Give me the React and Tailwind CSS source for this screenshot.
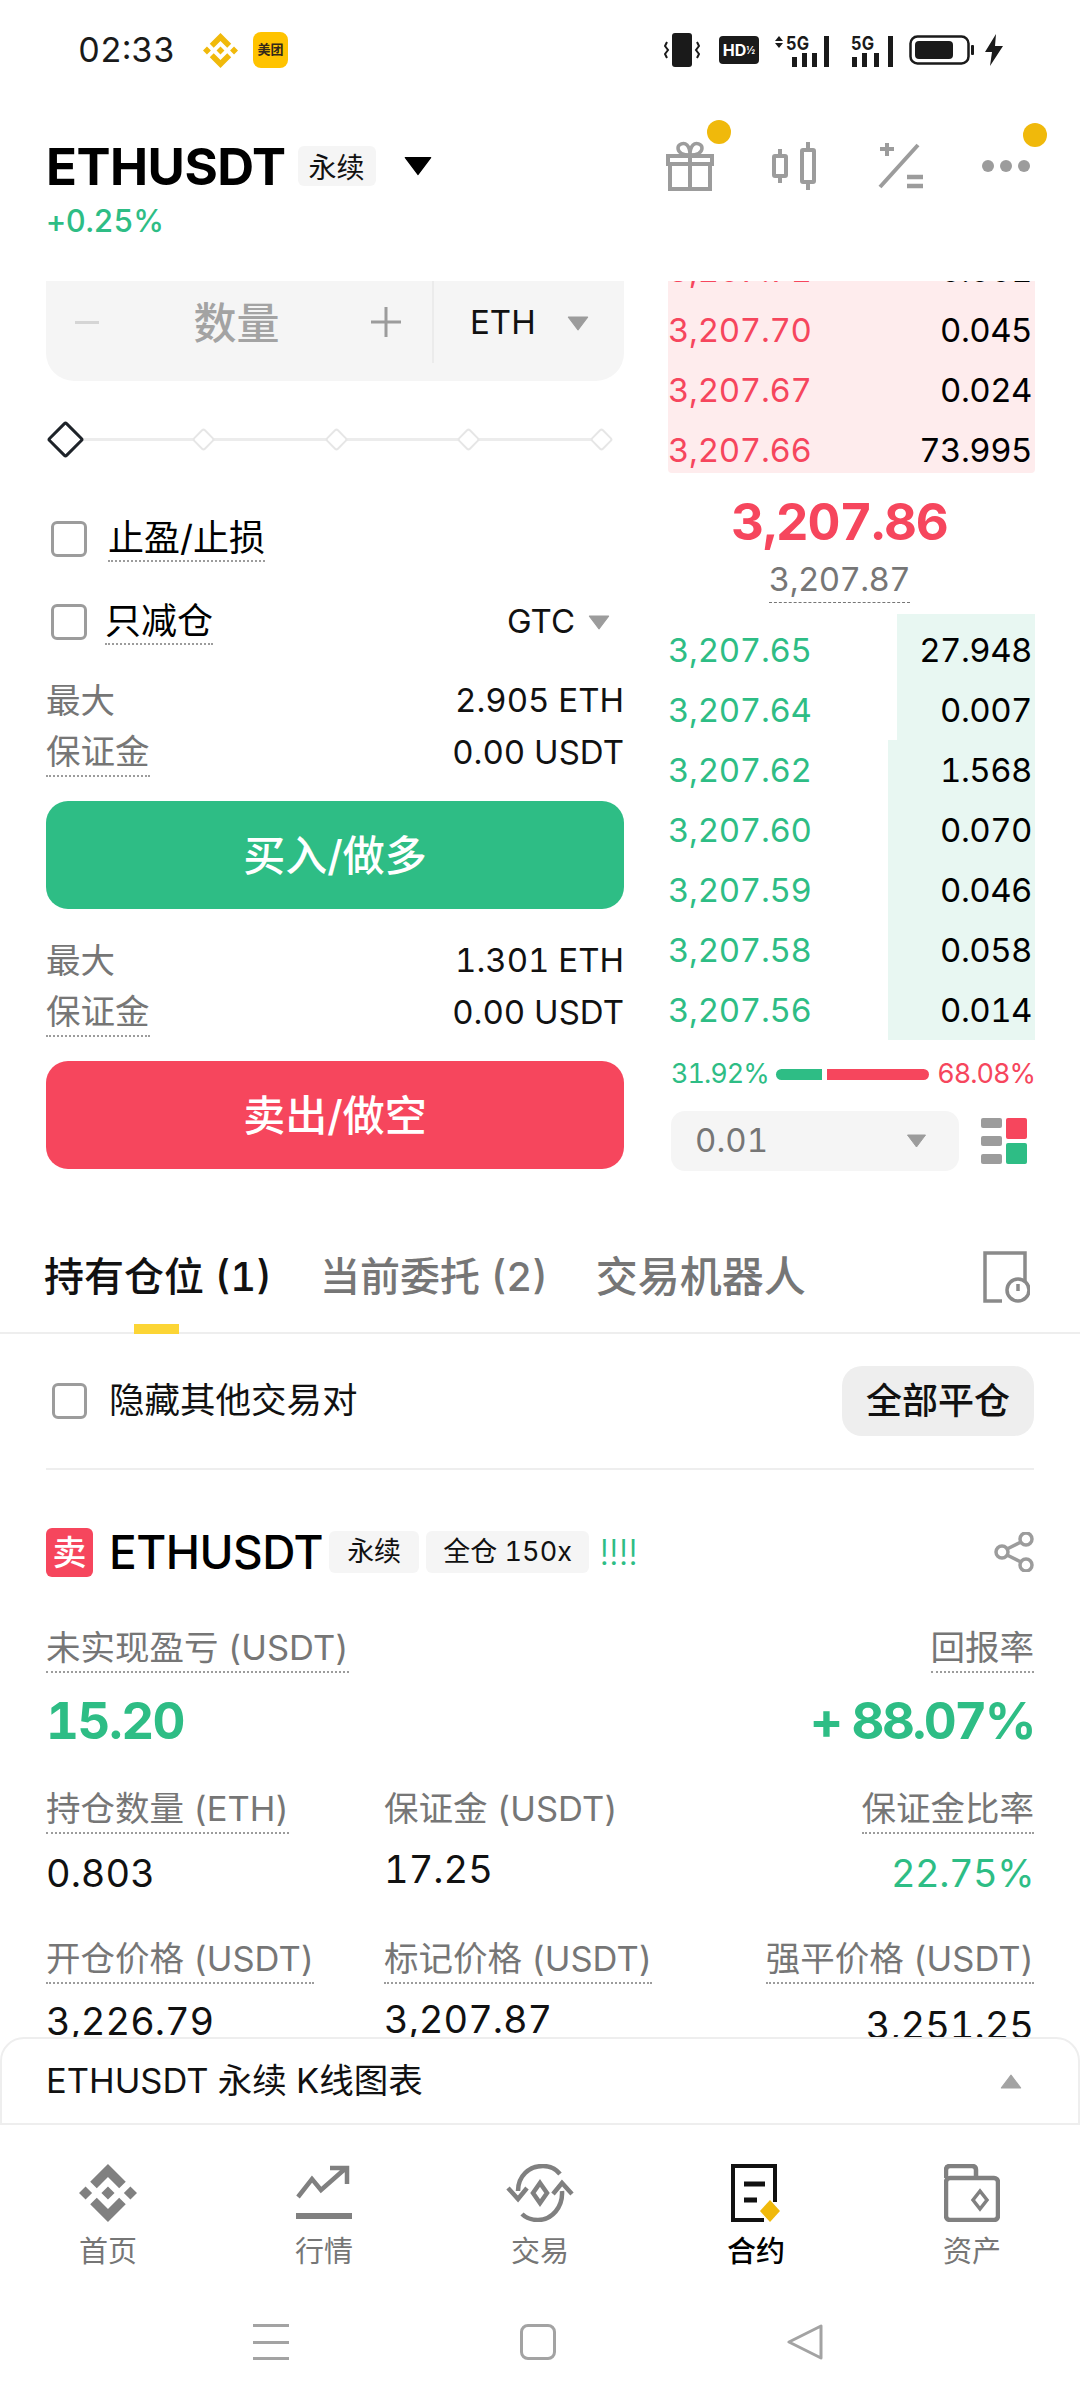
const FONT = "font-['Inter','Noto_Sans_CJK_SC',sans-serif]";

const BINANCE =
  'M16.624 13.92l2.718 2.716-7.353 7.353-7.353-7.352 2.717-2.717 4.636 4.66 4.635-4.66zm4.637-4.636L24 12l-2.715 2.716L18.568 12l2.693-2.716zm-9.272 0l2.716 2.692-2.716 2.717L9.272 12l2.717-2.716zm-9.273 0L5.41 12l-2.692 2.692L0 12l2.716-2.716zM11.989.012l7.353 7.329-2.717 2.715-4.636-4.635-4.635 4.66-2.718-2.716 7.353-7.353z';

// Triangle used by all the dropdowns
const Tri = ({ className = '', up = false }) => (
  <svg viewBox="0 0 20 14" className={className}>
    <path d={up ? 'M10 1l9 12H1z' : 'M1 1h18l-9 12z'} fill="currentColor" strokeLinejoin="round" stroke="currentColor" />
  </svg>
);

const Check = ({ className = '' }) => (
  <div className={`w-9 h-9 shrink-0 rounded-md border-[3px] border-[#9c9c9c] ${className}`}></div>
);

const Tag = ({ children, className = '' }) => (
  <span className={`flex items-center justify-center shrink-0 h-[42px] bg-[#f5f5f5] rounded-md text-[#111111] text-[27px] ${className}`}>
    {children}
  </span>
);

const Signal = ({ arrows }) => (
  <svg viewBox="0 0 60 34" className="w-[60px] h-[34px]">
    {arrows && <path d="M5 3l4 5H1zM5 15l4-5H1z" fill="#1a1a1a" />}
    <text x={arrows ? 12 : 1} y="17" fontSize="19" fontWeight="700" fill="#1a1a1a" fontFamily="Inter" textLength="23" lengthAdjust="spacingAndGlyphs">5G</text>
    <rect x={arrows ? 18 : 2} y="24" width="5" height="10" fill="#1a1a1a" />
    <rect x={arrows ? 28 : 12} y="20" width="5" height="14" fill="#1a1a1a" />
    <rect x={arrows ? 38 : 24} y="20" width="5" height="14" fill="#1a1a1a" />
    <rect x={arrows ? 50 : 38} y="3" width="5" height="31" fill="#1a1a1a" />
  </svg>
);

const StatusBar = () => (
  <div className="h-[100px] flex items-center pl-[78px] pr-[76px] shrink-0">
    <span className="text-[34px] text-[#1a1a1a] leading-none w-[125px]">02:33</span>
    <svg viewBox="0 0 24 24" className="w-[35px] h-[35px] text-[#f0b90b]"><path d={BINANCE} fill="currentColor" /></svg>
    <div className="ml-[15px] w-[35px] h-[36px] bg-[#ffc300] rounded-lg flex items-center justify-center text-[13px] font-bold text-[#33291a]">美团</div>
    <div className="ml-auto flex items-center">
      <svg viewBox="0 0 36 34" className="w-9 h-[34px]">
        <rect x="8" y="0" width="20" height="34" rx="3" fill="#1a1a1a" />
        <path d="M3 9l-2 4 3 4-3 4 2 4M33 9l2 4-3 4 3 4-2 4" fill="none" stroke="#1a1a1a" strokeWidth="2" />
      </svg>
      <div className="ml-[19px] w-10 h-7 bg-[#1a1a1a] rounded flex items-center justify-center text-white text-[16px] font-bold leading-none">HD<span className="text-[10px]">½</span></div>
      <div className="ml-[15px] flex items-center gap-[16px]">
        <Signal arrows />
        <Signal />
      </div>
      <svg viewBox="0 0 66 30" className="ml-[-1px] w-[66px] h-[30px]">
        <rect x="1.5" y="1.5" width="58" height="27" rx="7" fill="none" stroke="#1a1a1a" strokeWidth="2.5" />
        <rect x="6" y="6" width="38" height="18" rx="4" fill="#1a1a1a" />
        <rect x="62" y="10" width="3" height="10" rx="1" fill="#1a1a1a" />
      </svg>
      <svg viewBox="0 0 20 32" className="ml-[9px] w-5 h-8"><path d="M12 0L1 18h7L6 32 19 12h-8z" fill="#1a1a1a" /></svg>
    </div>
  </div>
);

const Dot = () => <span className="absolute -top-[21px] -right-[15px] w-6 h-6 rounded-full bg-[#f0b90b]"></span>;

const Header = () => (
  <div className="h-[181px] shrink-0 pl-[46px] pr-[50px] pt-[39px]">
    <div className="flex items-center h-[54px]">
      <span className="text-[51px] font-bold text-black leading-none tracking-[-0.5px]">ETHUSDT</span>
      <Tag className="ml-[12px] w-[78px] !h-[40px] text-[28px] pt-[3px]">永续</Tag>
      <Tri className="ml-[28px] w-[28px] h-5 text-black" />
      <div className="ml-auto flex items-center text-[#9c9c9c]">
        <div className="relative w-[52px] h-[50px]">
          <svg viewBox="0 0 52 50" className="w-[52px] h-[50px]" fill="none" stroke="currentColor" strokeWidth="4">
            <path d="M4 15h44v8H4zM6 23h40v25H6zM26 15v33" />
            <path d="M26 14c-8 0-12-3-12-7s6-6 9-3 3 10 3 10zm0 0c8 0 12-3 12-7s-6-6-9-3-3 10-3 10z" strokeWidth="3.5" />
          </svg>
          <Dot />
        </div>
        <svg viewBox="0 0 44 50" className="ml-[56px] w-11 h-[50px]" fill="none" stroke="currentColor" strokeWidth="4">
          <rect x="2" y="15" width="12" height="20" rx="1" />
          <rect x="30" y="9" width="12" height="32" rx="1" />
          <path d="M8 8v7M8 35v7M36 1v8M36 41v8" />
        </svg>
        <svg viewBox="0 0 46 46" className="ml-[61px] w-[46px] h-[46px]" fill="none" stroke="currentColor">
          <path d="M3 6h14M10 0v13M41 2L3 44" strokeWidth="4" />
          <path d="M30 34h16M30 43h16" strokeWidth="4.5" />
        </svg>
        <div className="relative ml-[59px] w-[48px] flex justify-between">
          <span className="w-3 h-3 rounded-full bg-[#9c9c9c]"></span>
          <span className="w-3 h-3 rounded-full bg-[#9c9c9c]"></span>
          <span className="w-3 h-3 rounded-full bg-[#9c9c9c]"></span>
          <span className="absolute -top-[37px] -right-[17px] w-6 h-6 rounded-full bg-[#f0b90b]"></span>
        </div>
      </div>
    </div>
    <div className="mt-[8px] text-[31px] leading-10 text-[#2ebd85] font-medium tracking-[-0.3px]">+0.25%</div>
  </div>
);

const SliderStep = () => (
  <span className="w-[17px] h-[17px] rotate-45 rounded-[3px] border-2 border-[#e6e6e6] bg-white shrink-0"></span>
);

const Dotted = ({ children, className = '' }) => (
  <span className={`inline-block border-b-2 border-dotted border-[#9c9c9c] ${className}`}>{children}</span>
);

const MaxBlock = ({ max, className = '' }) => (
  <div className={`${className}`}>
    <div className="flex justify-between items-center h-[52px]">
      <span className="text-[34.5px] text-[#767676]">最大</span>
      <span className="text-[33px] text-[#111111]">{max}</span>
    </div>
    <div className="flex justify-between items-center h-[52px]">
      <Dotted className="text-[34.5px] text-[#767676] leading-[46px]">保证金</Dotted>
      <span className="text-[33px] text-[#111111]">0.00 USDT</span>
    </div>
  </div>
);

const OrderForm = () => (
  <div className="w-[578px] shrink-0">
    <div className="h-[100px] bg-[#f5f5f5] rounded-b-[28px] flex">
      <div className="w-[388px] h-[82px] flex items-center pl-[29px] pr-[31px] border-r-2 border-[#ebebeb]">
        <span className="w-6 h-[3px] bg-[#d5d5d5]"></span>
        <span className="flex-1 text-center text-[43px] text-[#a3a3a3] font-medium pt-[3px] pl-[3px]">数量</span>
        <svg viewBox="0 0 30 30" className="w-[30px] h-[30px]"><path d="M15 0v30M0 15h30" stroke="#9c9c9c" strokeWidth="3" /></svg>
      </div>
      <div className="flex-1 h-[82px] flex items-center pl-[36px] pt-[2px]">
        <span className="text-[33px] text-[#111111]">ETH</span>
        <Tri className="ml-[31px] w-[22px] h-[15px] text-[#9c9c9c]" />
      </div>
    </div>
    <div className="mt-[38px] h-[40px] flex items-center">
      <span className="ml-[6px] w-[27px] h-[27px] rotate-45 rounded-[3px] border-[3px] border-[#1e2329] bg-white shrink-0"></span>
      <div className="flex-1 flex items-center">
        {[0, 1, 2, 3].map((i) => (
          <div key={i} className="flex-1 flex items-center justify-end">
            <div className="flex-1 h-[3px] bg-[#ececec]"></div>
            <SliderStep />
          </div>
        ))}
      </div>
      <span className="w-[14px]"></span>
    </div>
    <div className="mt-[58px] flex items-center h-[44px] pl-[5px]">
      <Check />
      <Dotted className="ml-[21px] text-[36px] text-black leading-[44px]">止盈/止损</Dotted>
    </div>
    <div className="mt-[39px] flex items-center h-[44px] pl-[5px]">
      <Check />
      <Dotted className="ml-[18px] text-[36px] text-black leading-[44px]">只减仓</Dotted>
      <span className="ml-auto text-[33px] text-[#111111]">GTC</span>
      <Tri className="ml-[13px] mr-[14px] w-[22px] h-[15px] text-[#9c9c9c]" />
    </div>
    <MaxBlock max="2.905 ETH" className="mt-[31px]" />
    <button className="mt-[22px] w-full h-[108px] rounded-[22px] bg-[#2ebd85] text-white text-[42px] font-medium">买入/做多</button>
    <MaxBlock max="1.301 ETH" className="mt-[26px]" />
    <button className="mt-[22px] w-full h-[108px] rounded-[22px] bg-[#f6465d] text-white text-[42px] font-medium">卖出/做空</button>
  </div>
);

const asks = [['3,207.71', '0.001'], ['3,207.70', '0.045'], ['3,207.67', '0.024'], ['3,207.66', '73.995']];
const bids = [
  ['3,207.65', '27.948', 138], ['3,207.64', '0.007', 138], ['3,207.62', '1.568', 147], ['3,207.60', '0.070', 147],
  ['3,207.59', '0.046', 147], ['3,207.58', '0.058', 147], ['3,207.56', '0.014', 147],
];

const BookRow = ({ price, qty, color }) => (
  <div className="flex justify-between items-center shrink-0 h-[60px] pr-[3px] text-[33px] leading-none">
    <span className={`${color} tracking-[-0.3px]`}>{price}</span>
    <span className="text-black tracking-[-0.5px]">{qty}</span>
  </div>
);

const OrderBook = () => (
  <div className="w-[367px] ml-[44px] shrink-0">
    <div className="h-[192px] bg-[#feeced] overflow-hidden rounded-b-sm">
      <div className="-mt-[41px]">
        {asks.map(([p, q]) => <BookRow key={p} price={p} qty={q} color="text-[#f6465d]" />)}
      </div>
    </div>
    <div className="h-[141px] flex flex-col items-center pr-[24px]">
      <span className="mt-[19px] text-[51px] font-bold text-[#f6465d] leading-[60px] tracking-[-1.1px]">3,207.86</span>
      <Dotted className="mt-[7px] text-[33px] text-[#767676] leading-[40px] tracking-[-0.6px] pb-[3px] !border-dashed !border-b !border-[#767676]">3,207.87</Dotted>
    </div>
    <div>
      {bids.map(([p, q, w], i) => (
        <div key={p} className={`relative ${i === 0 ? 'h-[66px] pt-[6px]' : ''}`}>
          <div style={{ width: w }} className="absolute right-0 top-0 bottom-0 bg-[#e8f7f2]"></div>
          <div className={`relative ${i === 6 ? '-mb-[5px]' : ''}`}>
            <BookRow price={p} qty={q} color="text-[#2ebd85]" />
          </div>
        </div>
      ))}
    </div>
    <div className="mt-[24px] h-[30px] flex items-center pl-[3px] tracking-[-1px]">
      <span className="text-[27px] text-[#2ebd85]">31.92%</span>
      <span className="ml-[7px] w-[46px] h-[11px] bg-[#2ebd85] rounded-l-full"></span>
      <span className="ml-[5px] w-[102px] h-[11px] bg-[#f6465d] rounded-r-full"></span>
      <span className="ml-auto text-[27px] text-[#f6465d]">68.08%</span>
    </div>
    <div className="mt-[22px] flex items-center pl-[3px]">
      <div className="w-[288px] h-[60px] bg-[#f5f5f5] rounded-[14px] flex items-center justify-between pl-[24px] pr-[32px]">
        <span className="text-[33px] text-[#767676]">0.01</span>
        <Tri className="w-[21px] h-[14px] text-[#9c9c9c]" />
      </div>
      <div className="ml-[22px] flex gap-[4px]">
        <div className="flex flex-col justify-between h-[46px]">
          <span className="w-[21px] h-[10px] bg-[#9c9c9c] rounded-[2px]"></span>
          <span className="w-[21px] h-[10px] bg-[#9c9c9c] rounded-[2px]"></span>
          <span className="w-[21px] h-[10px] bg-[#9c9c9c] rounded-[2px]"></span>
        </div>
        <div className="flex flex-col justify-between h-[46px]">
          <span className="w-[21px] h-[21px] bg-[#f6465d] rounded-[2px]"></span>
          <span className="w-[21px] h-[21px] bg-[#2ebd85] rounded-[2px]"></span>
        </div>
      </div>
    </div>
  </div>
);

const Tabs = () => (
  <div className="h-[163px] border-b-2 border-[#eeeeee] relative flex items-center pl-[44px] pr-[50px] pt-[50px]">
    <span className="text-[40px] font-medium text-[#111111]">持有仓位 (1)</span>
    <span className="ml-[48px] text-[40px] font-medium text-[#767676]">当前委托 (2)</span>
    <span className="ml-[48px] text-[42px] font-medium text-[#767676]">交易机器人</span>
    <svg viewBox="0 0 48 52" className="ml-auto w-12 h-[52px]" fill="none" stroke="#8a8a8a" strokeWidth="3.5">
      <path d="M20 50H3V2h40v28" />
      <circle cx="36" cy="39" r="11" />
      <path d="M36 33v7" />
    </svg>
    <span className="absolute left-[134px] -bottom-[2px] w-[45px] h-[10px] bg-[#fcd535]"></span>
  </div>
);

const Label = ({ children }) => (
  <Dotted className="text-[34.5px] text-[#767676] leading-[40px] pb-[3px]">{children}</Dotted>
);

const Plain = ({ children }) => (
  <span className="inline-block text-[34.5px] text-[#767676] leading-[40px] pb-[3px]">{children}</span>
);

const Position = () => (
  <div className="px-[46px]">
    <div className="h-[136px] border-b-2 border-[#eeeeee] flex items-center">
      <Check className="ml-[6px] !w-[35px]" />
      <span className="ml-[22px] text-[35.5px] text-[#111111]">隐藏其他交易对</span>
      <button className="ml-auto w-[192px] h-[70px] rounded-[20px] bg-[#eeeeee] text-[36px] font-medium text-[#111111]">全部平仓</button>
    </div>
    <div className="mt-[57px] flex items-center h-[50px]">
      <span className="w-[47px] h-[49px] rounded-md bg-[#f6465d] text-white text-[34px] font-medium flex items-center justify-center">卖</span>
      <span className="ml-[16px] text-[46px] font-medium text-black leading-none tracking-[-0.5px]">ETHUSDT</span>
      <Tag className="ml-[6px] w-[90px]">永续</Tag>
      <Tag className="ml-[7px] w-[163px]">全仓 150x</Tag>
      <span className="ml-[10px] text-[36px] font-light text-[#2ebd85] tracking-[-0.5px]">!!!!</span>
      <svg viewBox="0 0 40 40" className="ml-auto w-10 h-10" fill="none" stroke="#9c9c9c" strokeWidth="3.5">
        <circle cx="8" cy="20" r="6" /><circle cx="32" cy="7" r="6" /><circle cx="32" cy="33" r="6" />
        <path d="M13 17l14-7M13 23l14 7" />
      </svg>
    </div>
    <div className="mt-[51px] flex justify-between items-start">
      <Label>未实现盈亏 (USDT)</Label>
      <Label>回报率</Label>
    </div>
    <div className="mt-[19px] flex justify-between items-center h-[56px] text-[51px] leading-none font-bold text-[#2ebd85]">
      <span className="tracking-[-1.5px]">15.20</span>
      <span className="tracking-[-2.5px]">+ 88.07%</span>
    </div>
    <div className="mt-[41px] grid grid-cols-[338px_1fr_auto]">
      <div><Label>持仓数量 (ETH)</Label><div className="mt-[16px] text-[38px] leading-[46px] text-[#111111]">0.803</div></div>
      <div><Plain>保证金 (USDT)</Plain><div className="mt-[14px] text-[38px] leading-[46px] text-[#111111]">17.25</div></div>
      <div className="text-right"><Label>保证金比率</Label><div className="mt-[16px] text-[38px] leading-[46px] tracking-[-0.5px] text-[#2ebd85]">22.75%</div></div>
    </div>
    <div className="mt-[43px] grid grid-cols-[338px_1fr_auto]">
      <div><Label>开仓价格 (USDT)</Label><div className="mt-[14px] text-[38px] leading-[46px] text-[#111111]">3,226.79</div></div>
      <div><Label>标记价格 (USDT)</Label><div className="mt-[12px] text-[38px] leading-[46px] text-[#111111]">3,207.87</div></div>
      <div className="text-right"><Label>强平价格 (USDT)</Label><div className="mt-[18px] text-[38px] leading-[46px] text-[#111111]">3,251.25</div></div>
    </div>
  </div>
);

const NavItem = ({ label, active, children }) => (
  <div className="flex flex-col items-center w-[216px]">
    <div className="h-[60px] flex items-center justify-center">{children}</div>
    <span className={`mt-[11px] text-[29px] leading-[36px] ${active ? 'text-black font-medium' : 'text-[#767676]'}`}>{label}</span>
  </div>
);

const BottomNav = () => (
  <div className="h-[163px] shrink-0 pt-[38px] flex">
    <NavItem label="首页">
      <svg viewBox="0 0 24 24" className="w-[58px] h-[58px] text-[#808080]"><path d={BINANCE} fill="currentColor" /></svg>
    </NavItem>
    <NavItem label="行情">
      <svg viewBox="0 0 56 56" className="w-14 h-14" fill="none" stroke="#808080" strokeWidth="4.5">
        <path d="M2 32l14-18 9 11L50 3M34 3h17v16" />
        <path d="M0 51h56" strokeWidth="6" />
      </svg>
    </NavItem>
    <NavItem label="交易">
      <svg viewBox="0 0 70 58" className="w-[70px] h-[58px]" fill="none" stroke="#808080" strokeWidth="4.5">
        <path d="M13 27C13 12 24 2 38 2c7 0 13 3 17 8" />
        <path d="M57 27c1 16-10 29-24 29-7 0-12-2-16-6" />
        <path d="M3 24l10 11 9-11M48 30l9-11 10 11" />
        <path d="M35 19l7 10-7 10-7-10z" />
      </svg>
    </NavItem>
    <NavItem label="合约" active>
      <svg viewBox="0 0 50 58" className="w-[50px] h-[58px]" fill="none">
        <path d="M33 56H2V2h42v36" stroke="#111111" strokeWidth="4" />
        <path d="M13 20h21M13 36h13" stroke="#111111" strokeWidth="5" />
        <path d="M39 36l10 11-10 11-10-11z" fill="#f0b90b" />
      </svg>
    </NavItem>
    <NavItem label="资产">
      <svg viewBox="0 0 56 58" className="w-14 h-[58px]" fill="none" stroke="#808080" strokeWidth="4.5">
        <path d="M2 14V6q0-4 4-4h22q4 0 4 4v8" />
        <rect x="2" y="14" width="52" height="42" rx="4" />
        <path d="M36 27l7 9-7 9-7-9z" strokeWidth="3.5" />
      </svg>
    </NavItem>
  </div>
);

const SystemNav = () => (
  <div className="h-[120px] shrink-0 flex items-start justify-center pt-[36px] pr-[4px]">
    <div className="flex items-center gap-[231px]">
      <div className="flex flex-col justify-between w-9 h-9">
        <span className="h-[3px] bg-[#a3a3a3]"></span>
        <span className="h-[3px] bg-[#a3a3a3]"></span>
        <span className="h-[3px] bg-[#a3a3a3]"></span>
      </div>
      <div className="w-9 h-9 border-[3px] border-[#a3a3a3] rounded-lg"></div>
      <svg viewBox="0 0 36 36" className="w-9 h-9" fill="none" stroke="#a3a3a3" strokeWidth="3" strokeLinejoin="round"><path d="M34 2v32L2 18z" /></svg>
    </div>
  </div>
);

export default function App() {
  return (
    <div className={`w-[1080px] h-[2408px] bg-white overflow-hidden flex flex-col tabular-nums ${FONT}`}>
      <StatusBar />
      <Header />
      <div className="h-[1756px] shrink-0 overflow-hidden">
        <div className="flex pl-[46px]">
          <OrderForm />
          <OrderBook />
        </div>
        <Tabs />
        <Position />
      </div>
      <div className="h-[88px] shrink-0 rounded-t-[24px] border-2 border-b-2 border-[#eeeeee] relative bg-white flex items-center justify-between pl-[44px] pr-[56px]">
        <span className="text-[34.5px] text-[#111111]">ETHUSDT 永续 K线图表</span>
        <Tri up className="w-[22px] h-[15px] text-[#a3a3a3]" />
      </div>
      <BottomNav />
      <SystemNav />
    </div>
  );
}
